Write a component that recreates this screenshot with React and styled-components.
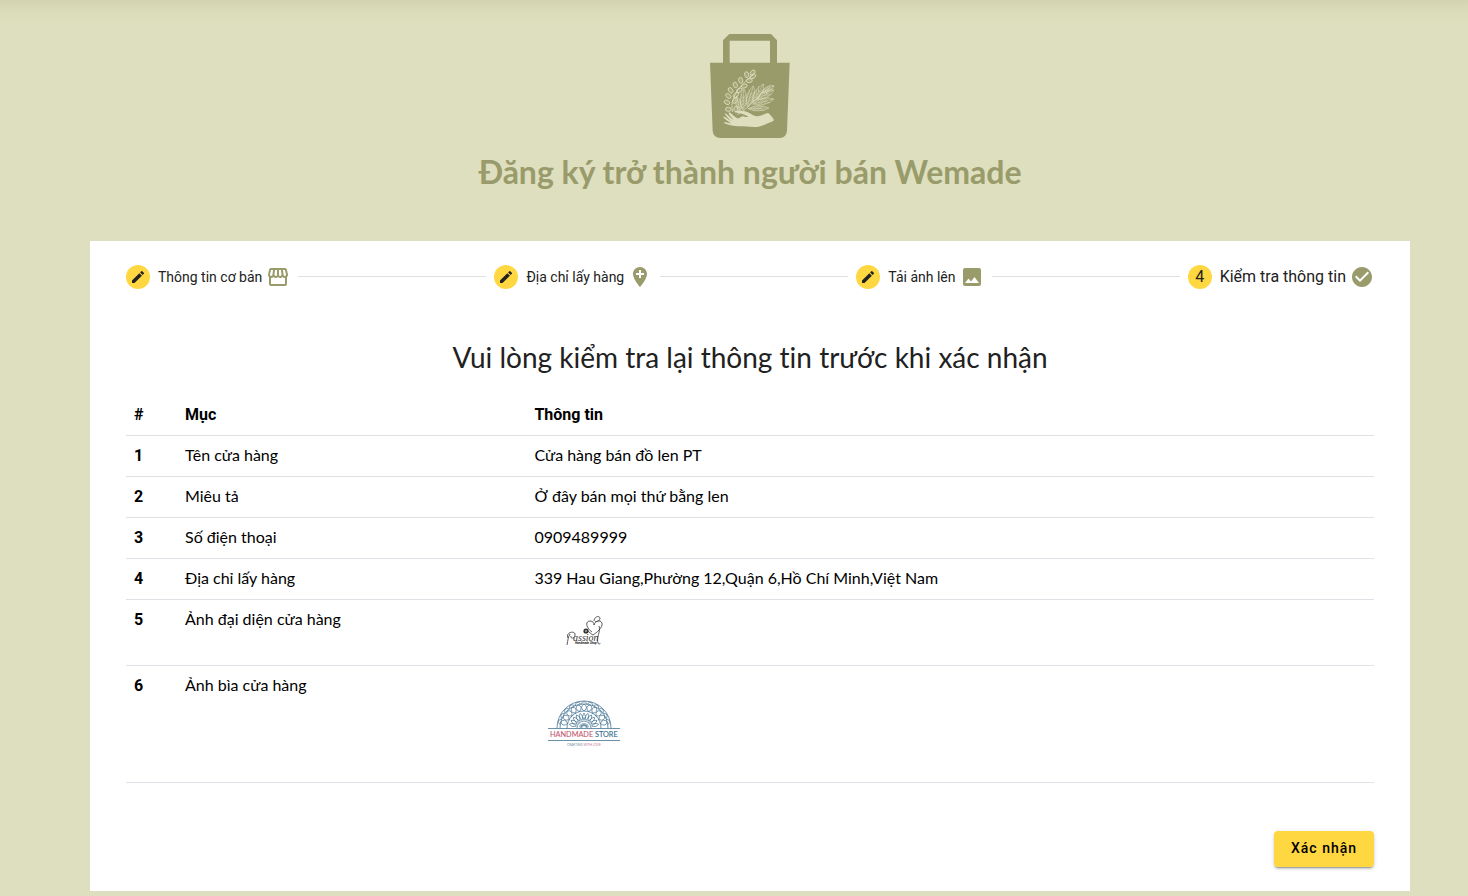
import React from "react";
import styled, { createGlobalStyle } from "styled-components";
import { MdEdit, MdStorefront, MdAddLocation, MdImage, MdCheckCircle } from "react-icons/md";

const round = "Lato, 'Noto Sans', sans-serif";

const GlobalStyle = createGlobalStyle`
  * { box-sizing: border-box; }
  body {
    margin: 0;
    background: #dedfbe;
    font-family: Roboto, sans-serif;
    font-variant-ligatures: none;
    color: #000;
  }
`;

const Page = styled.div`
  padding: 0 58px 5px 90px;
  background: linear-gradient(#d3d3b3, #dbdcba 12px, #dedfbe 26px);
`;

const Header = styled.header`
  display: flex;
  flex-direction: column;
  align-items: center;
  gap: 14px;
  padding: 34px 0 49px;
`;

const Title = styled.h1`
  margin: 0;
  font-family: ${round};
  font-size: 32px;
  line-height: 40px;
  font-weight: 700;
  color: #999b6b;
`;

const Card = styled.main`
  padding: 0 36px 24px;
  background: #fff;
`;

const Steps = styled.ol`
  display: flex;
  align-items: center;
  height: 72px;
  margin: 0;
  padding: 0;
  list-style: none;
`;

const Step = styled.li`
  display: flex;
  align-items: center;
  flex: 1 1 auto;

  &:not(:last-child)::after {
    content: "";
    flex: 1;
    height: 1px;
    margin: 0 8px 1px;
    background: #e0e0e0;
  }
  &:last-child { flex: none; }
`;

const StepButton = styled.button`
  display: flex;
  align-items: center;
  padding: 0;
  border: 0;
  background: none;
  font-family: inherit;
  font-size: ${(p) => (p.$current ? 16 : 14)}px;
  line-height: 24px;
  color: #212121;
  white-space: nowrap;
  cursor: pointer;
`;

const Badge = styled.span`
  display: flex;
  align-items: center;
  justify-content: center;
  width: 24px;
  height: 24px;
  margin-right: 8px;
  border-radius: 50%;
  background: #ffd740;
`;

const StepIcon = styled.span`
  display: flex;
  margin-left: 4px;
  font-size: 24px;
  color: #999b6b;
`;

const Subtitle = styled.h2`
  margin: 28px 0 21px;
  font-family: ${round};
  font-size: 28px;
  line-height: 33px;
  font-weight: 400;
  text-align: center;
  color: #212121;
`;

const Table = styled.table`
  width: 100%;
  table-layout: fixed;
  border-collapse: collapse;
  font-size: 16px;
  line-height: 24px;
`;

const Col = styled.col`
  width: ${(p) => p.$width};
`;

const HeadCell = styled.th`
  padding: 8px;
  border-bottom: 1px solid #dee2e6;
  font-weight: 700;
  text-align: left;
  vertical-align: top;
`;

const Cell = styled.td`
  padding: 7px 8px 9px;
  border-bottom: 1px solid #dee2e6;
  font-family: ${round};
  vertical-align: top;
`;

const Thumb = styled.svg`
  display: block;
  width: 100px;
  height: ${(p) => p.$height}px;
`;

const Actions = styled.div`
  display: flex;
  justify-content: flex-end;
  margin-top: 48px;
`;

const Confirm = styled.button`
  min-width: 100px;
  height: 36px;
  padding: 0 16px 2px;
  border: 0;
  border-radius: 4px;
  background: #ffd740;
  box-shadow: 0 3px 1px -2px rgba(0, 0, 0, 0.2), 0 2px 2px rgba(0, 0, 0, 0.14), 0 1px 5px rgba(0, 0, 0, 0.12);
  font-family: inherit;
  font-size: 14px;
  font-weight: 500;
  letter-spacing: 1px;
  color: #000;
  cursor: pointer;
`;

const sprigLeaves = [
  [115, 268, 5], [111, 247, 25], [115, 228, 40], [122, 211, 55], [136, 195, 70],
  [152, 181, 80], [170, 164, 75], [138, 266, 110], [135, 242, 125], [138, 225, 135],
  [148, 211, 150], [163, 198, 160], [178, 182, 170], [189, 169, 150], [188, 158, 130],
];

// Each leaflet runs from a point on the stem to its tip: x1, y1, x2, y2, half width.
const leaflets = [
  [150, 276, 140, 228, 9],
  [158, 270, 162, 208, 11],
  [172, 260, 190, 198, 12],
  [186, 248, 221, 192, 12],
  [200, 238, 251, 210, 11],
  [188, 252, 251, 237, 11],
  [174, 266, 236, 264, 9],
  [215, 218, 252, 197, 9],
];

function leafletPath([x1, y1, x2, y2, w]) {
  const dx = x2 - x1;
  const dy = y2 - y1;
  const len = Math.hypot(dx, dy);
  const ux = dx / len;
  const uy = dy / len;
  const at = (t, side) => `${(x1 + dx * t - uy * side).toFixed(1)} ${(y1 + dy * t + ux * side).toFixed(1)}`;
  let d = `M${x1} ${y1}C${at(0.2, w)} ${at(0.75, w * 1.2)} ${x2} ${y2}C${at(0.7, -w * 1.1)} ${at(0.25, -w)} ${x1} ${y1}L${x2} ${y2}`;
  [0.1, 0.25, 0.4, 0.55].forEach((t) => {
    d += `M${at(t, 0)}L${at(t + 0.24, w * 0.8)}M${at(t, 0)}L${at(t + 0.24, -w * 0.8)}`;
  });
  return d;
}

function BagLogo() {
  return (
    <svg width="80" height="104" viewBox="60 42 240 312" role="img" aria-label="Wemade">
      <path
        fill="#999b6b"
        fillRule="evenodd"
        d="M99 128V61L118 42H243L261 61V128H299L291 333Q289 353 269 354H91Q70 353 68 333L60 128ZM119 62V128H240V62Z"
      />
      <g fill="none" stroke="#dedfbe" strokeWidth="2.4">
        <path d="M128 276C118 240 142 200 190 164" />
        {sprigLeaves.map(([x, y, a]) => (
          <ellipse key={`${x}-${y}`} cx={x} cy={y} rx="9" ry="6" fill="#dedfbe" fillOpacity="0.2" transform={`rotate(${a} ${x} ${y})`} />
        ))}
        <path d="M142 284Q180 262 216 216" />
        <g strokeWidth="1.6">
          {leaflets.map((leaf) => <path key={leaf.join()} d={leafletPath(leaf)} />)}
        </g>
      </g>
      <path
        fill="#dedfbe"
        d="M134 274C150 270 166 272 178 279C188 284 194 290 204 289C216 287 226 280 235 279C242 286 249 292 252 301C246 306 241 308 235 309C222 315 207 322 191 321C172 320 158 318 146 319C132 318 118 317 101 309C102 305 112 308 124 311C116 304 105 298 99 290C102 288 115 299 126 305C115 296 107 288 104 279C109 280 117 291 131 300C123 290 115 283 116 277C124 278 129 288 142 295C147 297 151 291 158 289C167 291 171 292 175 290C164 282 148 280 134 277Z"
      />
    </svg>
  );
}

function AvatarThumb() {
  return (
    <Thumb $height={49} viewBox="0 0 100 49" role="img" aria-label="Passion Handmade Shop">
      <g fill="none" stroke="#333" strokeWidth="0.8">
        <path d="M58 25C52 21 51 14 56 14C59 14 60 16 60 18C61 14 66 12 68 16C69 21 62 26 59 28C57 27 55 25 54 24" />
        <path d="M60 14C60 10 65 8 66 11C66 15 61 15 61 14M65 19C67 25 62 30 64 36C65 38 66 37 66 36" />
        <path d="M33 38C34 33 34 30 36 27M34 31C31 25 42 23 41 28C41 32 36 32 37 29" />
      </g>
      <circle cx="52" cy="24" r="2.6" fill="#333" />
      <circle cx="52" cy="24" r="0.8" fill="#fff" />
      <text x="39" y="34" fontFamily="'Liberation Serif', serif" fontStyle="italic" fontSize="10" fill="#333">assion</text>
      <text x="41" y="37" fontFamily="Roboto, sans-serif" fontStyle="italic" fontWeight="700" fontSize="3" fill="#222">Handmade Shop</text>
    </Thumb>
  );
}

const petals = [-75, -60, -45, -30, -15, 0, 15, 30, 45, 60, 75];

function CoverThumb() {
  return (
    <Thumb $height={100} viewBox="-1 -1 100 100" role="img" aria-label="Handmade Store">
      <g fill="none" stroke="#457493" strokeWidth="0.8">
        <path d="M22 54A27 27 0 0 1 76 54M25 54A24 24 0 0 1 73 54M32 54A17 17 0 0 1 66 54M42 54A7 7 0 0 1 56 54" />
        {petals.map((a) => (
          <g key={a} transform={`rotate(${a} 49 54)`} strokeWidth="0.7">
            <path d="M49 37Q44 33 49 30Q54 33 49 37M46 30Q49 25 52 30" />
            <path d="M49 46Q46 42 49 39Q52 42 49 46M49 52V49" />
          </g>
        ))}
        <path d="M13 54.5H85M13 66.5H85" />
      </g>
      <text x="15" y="63" fontFamily="Lato, sans-serif" fontSize="7.3" fill="#c45c72" stroke="#c45c72" strokeWidth="0.1">
        HANDMADE <tspan fill="#356b8d" stroke="#356b8d">STORE</tspan>
      </text>
      <text x="32" y="72" fontFamily="Lato, sans-serif" fontSize="3.2" fill="#6f8ca3">
        CRAFTING <tspan fill="#c97b8b">WITH LOVE</tspan>
      </text>
    </Thumb>
  );
}

const steps = [
  { label: "Thông tin cơ bản", Icon: MdStorefront },
  { label: "Địa chỉ lấy hàng", Icon: MdAddLocation },
  { label: "Tải ảnh lên", Icon: MdImage },
  { label: "Kiểm tra thông tin", Icon: MdCheckCircle, current: true },
];

const rows = [
  ["Tên cửa hàng", "Cửa hàng bán đồ len PT"],
  ["Miêu tả", "Ở đây bán mọi thứ bằng len"],
  ["Số điện thoại", "0909489999"],
  ["Địa chỉ lấy hàng", "339 Hau Giang,Phường 12,Quận 6,Hồ Chí Minh,Việt Nam"],
  ["Ảnh đại diện cửa hàng", <AvatarThumb />],
  ["Ảnh bìa cửa hàng", <CoverThumb />],
];

export default function App() {
  return (
    <>
      <GlobalStyle />
      <Page>
        <Header>
          <BagLogo />
          <Title>Đăng ký trở thành người bán Wemade</Title>
        </Header>
        <Card>
          <Steps>
            {steps.map(({ label, Icon, current }, i) => (
              <Step key={label}>
                <StepButton type="button" $current={current} aria-current={current ? "step" : undefined}>
                  <Badge>{current ? i + 1 : <MdEdit size={16} />}</Badge>
                  {label}
                  <StepIcon><Icon /></StepIcon>
                </StepButton>
              </Step>
            ))}
          </Steps>
          <Subtitle>Vui lòng kiểm tra lại thông tin trước khi xác nhận</Subtitle>
          <Table>
            <colgroup>
              <Col $width="51px" />
              <Col $width="28%" />
              <Col $width="auto" />
            </colgroup>
            <thead>
              <tr>
                <HeadCell scope="col">#</HeadCell>
                <HeadCell scope="col">Mục</HeadCell>
                <HeadCell scope="col">Thông tin</HeadCell>
              </tr>
            </thead>
            <tbody>
              {rows.map(([name, value], i) => (
                <tr key={name}>
                  <HeadCell scope="row">{i + 1}</HeadCell>
                  <Cell>{name}</Cell>
                  <Cell>{value}</Cell>
                </tr>
              ))}
            </tbody>
          </Table>
          <Actions>
            <Confirm type="button">Xác nhận</Confirm>
          </Actions>
        </Card>
      </Page>
    </>
  );
}
